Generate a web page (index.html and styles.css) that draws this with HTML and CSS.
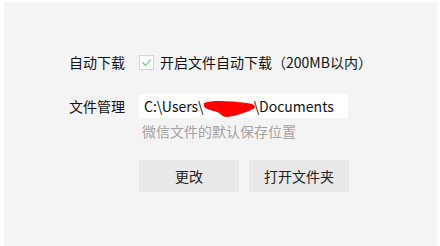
FILE: index.html
```html
<!DOCTYPE html>
<html>
<head>
    <title>文件设置</title>
    <link rel="stylesheet" href="styles.css">
</head>
<body>
    <div class="panel">
        <div class="form">
            <div class="label">自动下载</div>
            <div class="field check-row">
                <span class="checkbox">
                    <svg width="13" height="13" viewBox="0 0 13 13">
                        <path d="M2.5 6.5 L5.5 9.5 L11 3.5" fill="none" stroke="#6dbf6d" stroke-width="1.1"/>
                    </svg>
                </span>
                <span>开启文件自动下载（200MB以内）</span>
            </div>

            <div class="label label-path">文件管理</div>
            <div class="field">
                <div class="path-box">C:\Users\<span class="redact"><svg width="54" height="18" viewBox="0 0 54 18"><path d="M1 3 C10 0 26 1 44 3 C52 4 54 7 50 9 C44 12 34 16 24 17 C19 17 19 14 14 12 C8 10 2 9 1 6 Z" fill="#f00"/></svg></span>\Documents</div>
                <div class="hint">微信文件的默认保存位置</div>
                <div class="buttons">
                    <button class="btn">更改</button>
                    <button class="btn">打开文件夹</button>
                </div>
            </div>
        </div>
    </div>
</body>
</html>
```

FILE: styles.css
```css
body {
    margin: 0;
    background: #fff;
    font-family: "Noto Sans CJK SC", "Noto Sans", sans-serif;
    font-size: 14px;
    color: #111;
}

.panel {
    margin: 2px 3px 0 4px;
    height: 244px;
    background: #f4f4f4;
    padding-top: 50px;
    box-sizing: border-box;
}

.form {
    display: grid;
    grid-template-columns: 56px auto;
    column-gap: 14px;
    row-gap: 22px;
    margin-left: 65px;
}

.label {
    line-height: 20px;
    white-space: nowrap;
}

.label-path {
    line-height: 24px;
}

.check-row {
    display: flex;
    align-items: center;
    gap: 6px;
    line-height: 20px;
}

.checkbox {
    width: 15px;
    height: 15px;
    box-sizing: border-box;
    border: 1px solid #d6d6d6;
    background: #fff;
    display: flex;
    align-items: center;
    justify-content: center;
}

.path-box {
    width: 209px;
    height: 24px;
    box-sizing: border-box;
    background: #fff;
    padding: 0 5px;
    line-height: 24px;
    white-space: nowrap;
    overflow: hidden;
    display: flex;
    align-items: center;
}

.redact {
    display: inline-block;
    width: 50px;
    height: 24px;
    position: relative;
}

.redact svg {
    position: absolute;
    left: -1px;
    top: 6px;
}

.hint {
    margin-top: 4px;
    color: #a3a3a3;
    line-height: 18px;
    padding-left: 3px;
}

.buttons {
    display: flex;
    gap: 10px;
    margin-top: 20px;
}

.btn {
    width: 100px;
    height: 32px;
    border: none;
    background: #e8e8e8;
    font-family: inherit;
    font-size: 14px;
    color: #222;
    padding: 0;
}
```
